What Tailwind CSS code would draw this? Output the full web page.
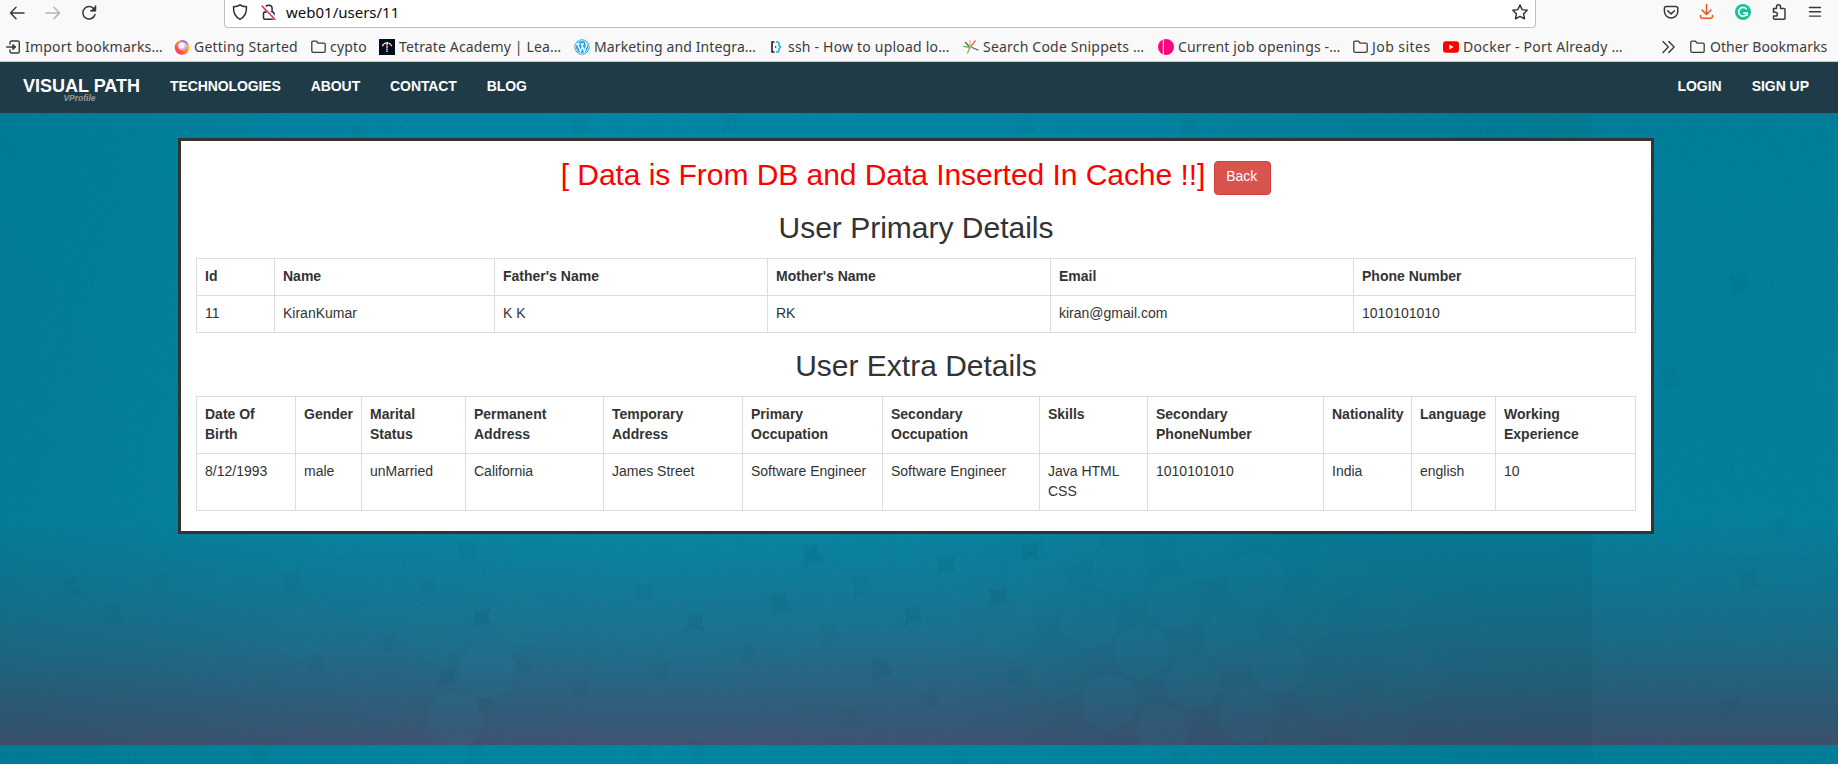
<!DOCTYPE html>
<html lang="en">
<head>
<meta charset="utf-8">
<title>User Details</title>
<script src="https://cdn.jsdelivr.net/npm/@tailwindcss/browser@4"></script>
</head>
<body class="h-[764px] w-[1838px] overflow-hidden bg-[#0084a1] font-['Liberation_Sans',Arial,sans-serif] text-sm leading-5 text-[#333]">
<div class="relative flex h-[764px] flex-col">

<!-- Backdrop: repeating teal tile with faint discs -->
<svg class="absolute inset-0 -z-0" width="1838" height="764" viewBox="0 0 1838 764" aria-hidden="true">
  <defs>
    <linearGradient id="v" x1="0" y1="0" x2="0" y2="1">
      <stop offset="0" stop-color="#0087a5"/><stop offset=".7" stop-color="#0788a6"/><stop offset=".76" stop-color="#0e809e"/>
      <stop offset=".86" stop-color="#1f718f"/><stop offset=".93" stop-color="#2e6281"/><stop offset=".965" stop-color="#385a7a"/><stop offset="1" stop-color="#435472"/>
    </linearGradient>
    <linearGradient id="h" x1="0" y1="0" x2="1" y2="0">
      <stop offset="0" stop-color="#002a2a" stop-opacity=".12"/><stop offset=".22" stop-color="#002a2a" stop-opacity=".03"/><stop offset=".4" stop-color="#002a2a" stop-opacity="0"/>
      <stop offset=".65" stop-color="#002a2a" stop-opacity=".02"/><stop offset=".85" stop-color="#002a2a" stop-opacity=".09"/><stop offset="1" stop-color="#002a2a" stop-opacity=".14"/>
    </linearGradient>
    <linearGradient id="k" x1="0" y1="0" x2="1" y2="0">
      <stop offset="0" stop-color="#003f50" stop-opacity="0"/><stop offset=".2" stop-color="#003f50" stop-opacity=".08"/><stop offset=".6" stop-color="#003f50" stop-opacity=".07"/><stop offset="1" stop-color="#003f50" stop-opacity=".02"/>
    </linearGradient>
    <path id="d" d="M-11-10Q0-7 5-13Q6-1 12 8Q2 6-9 13Q-6 0-11-10Z"/>
    <path id="e" d="M-9-9Q2-5 10-12Q4 0 9 8Q0 4-10 11Q-5 0-9-9Z"/>
    <filter id="n" x="0" y="0" width="1" height="1"><feTurbulence type="fractalNoise" baseFrequency=".35" numOctaves="2" seed="4"/><feColorMatrix values="0 0 0 0 0  0 0 0 0 .12  0 0 0 0 .15  .35 0 0 0 -.1"/></filter>
  </defs>
  <rect width="1838" height="745" fill="url(#v)"/>
  <rect y="745" width="1838" height="19" fill="#0087a5"/>
  <g fill="#003f50" fill-opacity=".09">
    <use href="#d" x="812" y="555"/><use href="#d" x="780" y="604"/><use href="#e" x="695" y="623"/><use href="#d" x="881" y="668"/><use href="#e" x="946" y="565"/><use href="#e" x="913" y="616"/><use href="#e" x="998" y="597"/><use href="#e" x="1030" y="552"/>
    <use href="#e" x="447" y="677"/><use href="#e" x="482" y="618"/>
  </g>
  <g fill="#003f50" fill-opacity=".045">
    <use href="#e" x="644" y="592"/><use href="#d" x="862" y="585"/><use href="#e" x="750" y="653"/><use href="#d" x="930" y="700"/><use href="#d" x="830" y="635"/><use href="#e" x="1015" y="677"/><use href="#d" x="850" y="718"/><use href="#e" x="662" y="672"/>
    <use href="#d" x="71" y="588"/><use href="#d" x="316" y="665"/><use href="#d" x="391" y="643"/><use href="#e" x="522" y="665"/><use href="#d" x="486" y="707"/><use href="#e" x="427" y="587"/><use href="#d" x="293" y="583"/><use href="#e" x="581" y="690"/><use href="#d" x="467" y="550"/><use href="#e" x="160" y="582"/><use href="#d" x="114" y="615"/>
    <use href="#e" x="360" y="132"/><use href="#d" x="580" y="126"/><use href="#e" x="730" y="124"/><use href="#d" x="1025" y="125"/><use href="#e" x="1190" y="128"/>
    <use href="#d" x="698" y="751"/><use href="#e" x="645" y="754"/><use href="#d" x="960" y="760"/><use href="#e" x="1180" y="760"/><use href="#d" x="476" y="752"/><use href="#e" x="260" y="756"/>
    <use href="#d" x="1740" y="283"/><use href="#e" x="1775" y="528"/><use href="#d" x="1750" y="580"/><use href="#e" x="1730" y="708"/><use href="#d" x="1672" y="378"/>
  </g>
  <rect x="950" y="534" width="642" height="211" fill="url(#k)"/>
  <g fill="#2da0b8" fill-opacity=".07">
    <circle cx="487" cy="670" r="28"/><circle cx="455" cy="720" r="28"/>
    <circle cx="1039" cy="587" r="31"/><circle cx="1071" cy="538" r="29"/><circle cx="1121" cy="570" r="29"/><circle cx="1174" cy="602" r="27"/><circle cx="1089" cy="620" r="29"/><circle cx="1142" cy="652" r="27"/><circle cx="1109" cy="702" r="28"/><circle cx="1193" cy="682" r="27"/><circle cx="1205" cy="552" r="29"/><circle cx="1162" cy="732" r="26"/><circle cx="1256" cy="582" r="29"/><circle cx="1232" cy="637" r="28"/><circle cx="1278" cy="666" r="28"/><circle cx="1246" cy="716" r="28"/>
  </g>
  <g fill="#2da0b8" fill-opacity=".035">
    <circle cx="518" cy="617" r="29"/><circle cx="300" cy="632" r="28"/><circle cx="435" cy="634" r="26"/><circle cx="1059" cy="670" r="29"/><circle cx="1010" cy="632" r="28"/>
    <circle cx="1307" cy="613" r="29"/><circle cx="1328" cy="695" r="28"/><circle cx="1293" cy="744" r="26"/><circle cx="1381" cy="726" r="29"/><circle cx="1408" cy="680" r="29"/><circle cx="1343" cy="567" r="29"/><circle cx="1393" cy="600" r="29"/>
    <circle cx="1840" cy="378" r="28"/><circle cx="1750" cy="528" r="28"/>
  </g>
  <rect width="1592.500" height="764" fill="url(#h)"/>
  <rect x="1592.500" width="246" height="764" fill="#002a2a" fill-opacity=".08"/>
  <rect y="113" width="1838" height="651" filter="url(#n)" opacity=".6"/>
</svg>

<!-- Browser chrome -->
<header class="relative h-[62px] shrink-0 border-b border-[#ccc] bg-[#f9f9fa] font-['Noto_Sans','Open_Sans',sans-serif]">
  <div class="flex h-7 items-start">
    <svg class="shrink-0" width="224" height="28" fill="none" stroke="#3a3a3c" stroke-width="1.5" stroke-linecap="round" stroke-linejoin="round" aria-hidden="true">
      <path d="M24 13H10.500M16 7.300L10.500 13l5.500 5.700"/>
      <path stroke="#b4b4b6" d="M46 13h13.500M54 7.300l5.500 5.700-5.500 5.700"/>
      <path d="M94.300 9.500A6.200 6.200 0 1 0 95 14.500M95.500 6v4.700h-4.700"/><path fill="#3a3a3c" stroke="none" d="M96 5.500v5.800h-5.800z"/>
    </svg>
    <div class="flex h-7 w-[1312px] shrink-0 items-start rounded-b border border-t-0 border-[#bfbfc1] bg-white">
      <svg class="shrink-0" width="60" height="27" fill="none" stroke="#2d2d30" stroke-width="1.500" stroke-linejoin="round" stroke-linecap="round" aria-hidden="true">
        <path d="M15 4.800c2 1.600 4.200 1.900 6.500 2 .3 6.500-2.500 10.500-6.500 12.500C11 17.300 8.200 13.300 8.500 6.800c2.300-.1 4.500-.4 6.500-2z"/>
        <rect x="38.500" y="12" width="10.500" height="7.300" rx="1.500"/><path d="M40.500 12V8.500a3.300 3.300 0 0 1 6.600 0V12"/>
        <path stroke="#fff" stroke-width="3.500" d="M38 6l12.500 13"/><path stroke="#e22850" d="M37 6l12.800 13.300"/>
      </svg>
      <div class="w-[1226px] pl-px pt-[2px] text-[15px] leading-5 text-[#0c0c0d]">web01/users/11</div>
      <svg width="18" height="27" fill="none" stroke="#2d2d30" stroke-width="1.400" stroke-linejoin="round" aria-hidden="true"><path d="M9 5l2.200 4.600 5 .7-3.600 3.500.9 5L9 16.400l-4.500 2.400.9-5L1.800 10.300l5-.7z"/></svg>
    </div>
    <svg class="shrink-0" width="302" height="28" fill="none" stroke="#3a3a3c" stroke-width="1.500" stroke-linecap="round" stroke-linejoin="round" aria-hidden="true">
      <path d="M130.300 6.500h9.500a2 2 0 0 1 2 2v2.700a6.700 6.700 0 0 1-13.400 0V8.500a2 2 0 0 1 2-2zM131.700 10.800l3.400 3.100 3.400-3.100"/>
      <path stroke="#f0531e" d="M170.500 4.500v9.500M166 10l4.500 4.500L175 10M164.500 15.500v1a1.700 1.700 0 0 0 1.700 1.700h8.600a1.700 1.700 0 0 0 1.700-1.700v-1"/>
      <circle cx="207" cy="12" r="8" fill="#15c39a" stroke="none"/><path stroke="#fff" stroke-width="1.600" d="M210.300 8.800a4.400 4.400 0 1 0 1 4.200h-3.500M211.300 13l-.2 2.500"/>
      <path d="M237.500 8.500h3v-1.700a2 2 0 0 1 4 0v1.700h3.500a1 1 0 0 1 1 1v8.800a1 1 0 0 1-1 1h-9.500a1 1 0 0 1-1-1V16h2a1.700 1.700 0 0 0 0-3.700h-2z"/>
      <path d="M273.500 7.500h11M273.500 11.800h11M273.500 16.100h11" stroke-width="1.400"/>
    </svg>
  </div>
  <nav class="flex h-[33px] items-center whitespace-nowrap pt-[5px] text-sm text-[#3c3c3e]">
    <div class="flex w-[174px] items-center pl-1.5"><svg class="mr-[5px]" width="14" height="14" fill="none" stroke="#3c3c3e" stroke-width="1.400" stroke-linecap="round" stroke-linejoin="round" aria-hidden="true"><path d="M4 4V2.500A1.500 1.500 0 0 1 5.500 1h6.300a1.500 1.500 0 0 1 1.500 1.500v9a1.500 1.500 0 0 1-1.500 1.500H5.500A1.500 1.500 0 0 1 4 11.500V10M.7 7H9"/><path fill="#3c3c3e" d="M7 4.800L9.300 7 7 9.200z"/></svg><span class="tracking-[0.2px]">Import bookmarks…</span></div>
    <div class="flex w-[137px] items-center"><svg class="mr-1" width="16" height="16" aria-hidden="true"><defs><linearGradient id="f" x1="1" y1="0" x2="0" y2="1"><stop offset="0" stop-color="#fff36b"/><stop offset=".4" stop-color="#ff9a2b"/><stop offset=".75" stop-color="#ff4a45"/><stop offset="1" stop-color="#f0268a"/></linearGradient></defs><circle cx="8" cy="8.500" r="7.300" fill="url(#f)"/><path d="M5 2.500C9-.5 14 2 14.500 6.500 12.500 3 8 2 5 2.500z" fill="#9059ff"/><circle cx="8.200" cy="7" r="4.300" fill="#c8b8fa"/><circle cx="7.700" cy="6.500" r="3" fill="#f7f2ff"/></svg><span class="tracking-[0.22px]">Getting Started</span></div>
    <div class="flex w-[68px] items-center"><svg class="mr-1" width="15" height="14" fill="none" stroke="#3c3c3e" stroke-width="1.300" stroke-linejoin="round" aria-hidden="true"><path d="M.8 11V2.500A1.300 1.300 0 0 1 2.100 1.200h3.300l1.900 2h5.600a1.300 1.300 0 0 1 1.300 1.300V11a1.300 1.300 0 0 1-1.300 1.300H2.100A1.300 1.300 0 0 1 .8 11z"/></svg><span class="tracking-[0.2px]">cypto</span></div>
    <div class="flex w-[195px] items-center"><svg class="mr-1" width="16" height="16" aria-hidden="true"><path fill="#020c1c" d="M0 0h16v16H0z"/><path d="M3.300 7L5 4.800 8 3.500l3 1.300L12.700 7M8 4v9" fill="none" stroke="#fff" stroke-width="1.300" stroke-dasharray="2.200 .5"/><circle cx="8" cy="7.500" r="1.200" fill="#f2683c"/></svg><span class="tracking-[0.14px]">Tetrate Academy | Lea…</span></div>
    <div class="flex w-[196px] items-center"><svg class="mr-1" width="16" height="16" fill="none" aria-hidden="true"><circle cx="8" cy="8" r="7.200" fill="#fff" stroke="#1ea5dc" stroke-width="1"/><circle cx="8" cy="8" r="6" fill="#1ea5dc"/><path d="M2.500 5h3.200M6.800 5H10M3.700 5l2.800 7.500L8.300 8M7.500 5l2.900 7.500 2-6c.4-1.200-.8-1.700-.8-2.900" stroke="#fff" stroke-width="1.300"/></svg><span class="tracking-[0.12px]">Marketing and Integra…</span></div>
    <div class="flex w-[193px] items-center"><svg class="mr-0.5" width="16" height="16" fill="none" stroke-width="1.600" aria-hidden="true"><path stroke="#222" d="M4.500 3H2v10h2.500"/><path stroke="#18aef2" d="M6 3h1.500Q9 3 9 4.700V6.500L10.500 8 9 9.500v1.800Q9 13 7.500 13H6"/><path fill="#222" d="M5 7.300h1.300v1.400H5z"/></svg><span class="tracking-[0.2px]">ssh - How to upload lo…</span></div>
    <div class="flex w-[195px] items-center"><svg class="mr-1" width="16" height="16" fill="none" stroke-width="1.300" stroke-linecap="round" aria-hidden="true"><path stroke="#f2b24b" d="M7 7V1.500"/><path stroke="#ef5350" d="M8 7.500L12 1.800"/><path stroke="#5b519d" d="M5.500 6.500L2.500 3.500M9 8.500l6 2.500"/><path stroke="#6cc04a" d="M7 8.500L4.500 14M6 8L.8 7.500"/><path fill="#6cc04a" d="M4 6.500l4 .5-1.500 4z"/></svg><span class="tracking-[0.2px]">Search Code Snippets …</span></div>
    <div class="flex w-[195px] items-center"><svg class="mr-1" width="16" height="16" aria-hidden="true"><circle cx="8" cy="8" r="8" fill="#ff0582"/><path fill="#f9f9fa" d="M4.800 0h1v16h-1z"/></svg><span class="tracking-[0.16px]">Current job openings -…</span></div>
    <div class="flex w-[90px] items-center"><svg class="mr-1" width="15" height="14" fill="none" stroke="#3c3c3e" stroke-width="1.300" stroke-linejoin="round" aria-hidden="true"><path d="M.8 11V2.500A1.300 1.300 0 0 1 2.100 1.200h3.300l1.900 2h5.600a1.300 1.300 0 0 1 1.300 1.300V11a1.300 1.300 0 0 1-1.300 1.300H2.100A1.300 1.300 0 0 1 .8 11z"/></svg><span class="tracking-[0.45px]">Job sites</span></div>
    <div class="flex w-[219px] items-center"><svg class="mr-1" width="16" height="16" aria-hidden="true"><rect y="2.300" width="16" height="11.400" rx="3" fill="#f00"/><path fill="#fff" d="M6.300 5.500v5L10.700 8z"/></svg><span class="tracking-[0.25px]">Docker - Port Already …</span></div>
    <svg class="mr-[15px] shrink-0" width="13" height="14" fill="none" stroke="#3c3c3e" stroke-width="1.400" stroke-linecap="round" stroke-linejoin="round" aria-hidden="true"><path d="M1 1.500L6.300 7 1 12.500M6.800 1.500L12.100 7l-5.300 5.500"/></svg>
    <div class="flex items-center"><svg class="mr-[5px]" width="15" height="14" fill="none" stroke="#3c3c3e" stroke-width="1.300" stroke-linejoin="round" aria-hidden="true"><path d="M.8 11V2.500A1.300 1.300 0 0 1 2.100 1.200h3.300l1.900 2h5.600a1.300 1.300 0 0 1 1.300 1.300V11a1.300 1.300 0 0 1-1.300 1.300H2.100A1.300 1.300 0 0 1 .8 11z"/></svg><span class="tracking-[0.06px]">Other Bookmarks</span></div>
  </nav>
</header>

<!-- Site navigation -->
<nav class="relative flex h-[51px] shrink-0 items-start justify-between bg-[#1f3b47] pl-[23px] pr-[29px] font-bold text-white">
  <div class="flex items-start">
    <div class="w-[117px] pt-3.5 text-center text-lg leading-5">VISUAL PATH<div class="-mt-[3px] pr-1 text-[8.5px] italic leading-[10px] text-[#999]">VProfile</div></div>
    <div class="flex gap-[30px] pl-[30px] pt-3.5 tracking-[-0.1px]"><a>TECHNOLOGIES</a><a>ABOUT</a><a>CONTACT</a><a>BLOG</a></div>
  </div>
  <div class="flex gap-[30px] pt-3.5 tracking-[-0.03px]"><a>LOGIN</a><a>SIGN UP</a></div>
</nav>

<!-- User details -->
<main class="relative ml-[178px] mt-[25px] h-[396px] w-[1476px] border-[3px] border-[#333] bg-white px-[15px] pt-5">
  <div class="flex h-[34px] justify-center gap-[9px]">
    <h2 class="-mt-[3px] text-[30px] leading-[33px] tracking-[-0.05px] text-[#f00]">[ Data is From DB and Data Inserted In Cache !!]</h2>
    <a class="h-[34px] w-[57px] rounded border border-[#d43f3a] bg-[#d9534f] pr-0.5 pt-1 text-center text-white">Back</a>
  </div>
  <h2 class="mt-4 h-[47px] text-center text-[30px] leading-[33px]">User Primary Details</h2>
  <table class="w-[1440px] table-fixed border-separate border-spacing-0 border-b border-r border-[#ddd] text-left align-top">
    <colgroup><col class="w-[78px]"><col class="w-[220px]"><col class="w-[273px]"><col class="w-[283px]"><col class="w-[303px]"><col class="w-[282px]"></colgroup>
    <tr class="h-[37px] align-top *:border-l *:border-t *:border-[#ddd] *:px-2 *:pb-[9px] *:pt-[7px]"><th>Id</th><th>Name</th><th>Father's Name</th><th>Mother's Name</th><th>Email</th><th>Phone Number</th></tr>
    <tr class="h-[37px] align-top *:border-l *:border-t *:border-[#ddd] *:px-2 *:pb-[9px] *:pt-[7px]"><td>11</td><td>KiranKumar</td><td>K K</td><td>RK</td><td>kiran@gmail.com</td><td>1010101010</td></tr>
  </table>
  <h2 class="mt-4 h-[47px] text-center text-[30px] leading-[33px]">User Extra Details</h2>
  <table class="w-[1440px] table-fixed border-separate border-spacing-0 border-b border-r border-[#ddd] text-left">
    <colgroup><col class="w-[99px]"><col class="w-[66px]"><col class="w-[104px]"><col class="w-[138px]"><col class="w-[139px]"><col class="w-[140px]"><col class="w-[157px]"><col class="w-[108px]"><col class="w-[176px]"><col class="w-[88px]"><col class="w-[84px]"><col class="w-[140px]"></colgroup>
    <tr class="h-[57px] align-top *:border-l *:border-t *:border-[#ddd] *:pl-2 *:pb-[9px] *:pt-[7px]"><th>Date Of<br>Birth</th><th>Gender</th><th>Marital<br>Status</th><th>Permanent<br>Address</th><th>Temporary<br>Address</th><th>Primary<br>Occupation</th><th>Secondary<br>Occupation</th><th>Skills</th><th>Secondary<br>PhoneNumber</th><th>Nationality</th><th>Language</th><th>Working<br>Experience</th></tr>
    <tr class="h-[57px] align-top *:border-l *:border-t *:border-[#ddd] *:pl-2 *:pb-[9px] *:pt-[7px]"><td>8/12/1993</td><td>male</td><td>unMarried</td><td>California</td><td>James Street</td><td>Software Engineer</td><td>Software Engineer</td><td>Java HTML<br>CSS</td><td>1010101010</td><td>India</td><td>english</td><td>10</td></tr>
  </table>
</main>
</div>
</body>
</html>
